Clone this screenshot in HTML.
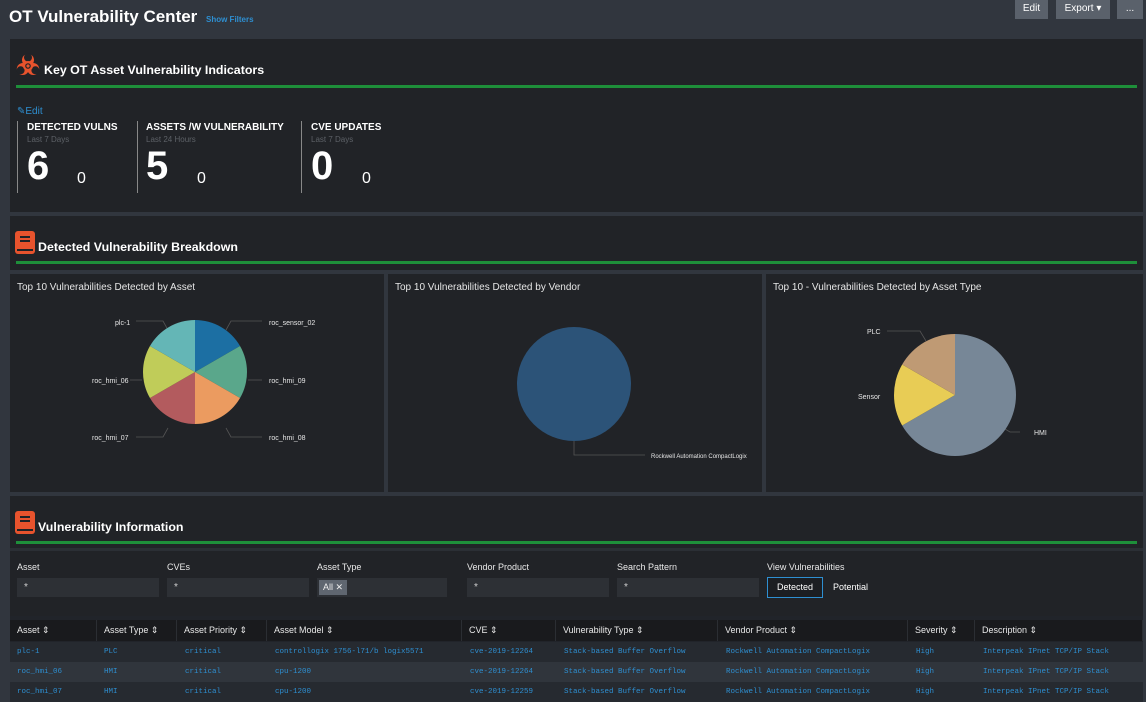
<!DOCTYPE html>
<html><head><meta charset="utf-8"><style>
*{margin:0;padding:0;box-sizing:border-box}
body{width:1146px;height:701px;overflow:hidden;background:#31363e;font-family:"Liberation Sans",sans-serif;color:#fff;position:relative}
.a{position:absolute}
.p{position:absolute;background:#212327}
.h{font-weight:bold;font-size:12.4px;color:#fff}
.g{position:absolute;height:3px;background:#1e8f3a}
.btn{position:absolute;top:0;height:19px;background:#5a616b;color:#fff;font-size:10px;text-align:center;line-height:18px}
.lbl{font-size:9px;color:#e8e8e8}
.in{position:absolute;height:19px;background:#2d3035;font-size:10px;color:#ccc;padding:4px 7px}
.th{position:absolute;top:620px;height:21px;background:#191a1d;font-size:9px;color:#e8e8e8;padding:5px 7px;border-right:1px solid #2b2e33}
.row{position:absolute;left:10px;width:1133px;height:20px;font-family:"Liberation Mono",monospace;font-size:7.5px;color:#2e8fd1}
.row span{position:absolute;top:6px}
.ct{font-size:10px;color:#e6e6e6;position:absolute;left:7px;top:8px}
.kt{font-size:10px;font-weight:bold;color:#fff}
.ks{font-size:8px;color:#5d6167;margin-top:2px}
.kn{font-size:40px;font-weight:bold;line-height:40px;margin-top:2px}
.kz{position:absolute;font-size:16px;color:#fff}
</style></head><body>
<div class="a" style="left:9px;top:7px;font-size:17px;font-weight:bold">OT Vulnerability Center</div>
<div class="a" style="left:206px;top:15px;font-size:8px;color:#2e8fd1;font-weight:bold">Show Filters</div>
<div class="btn" style="left:1015px;width:33px;top:0">Edit</div>
<div class="btn" style="left:1056px;width:54px">Export ▾</div>
<div class="btn" style="left:1117px;width:26px">...</div>

<div class="p" style="left:10px;top:39px;width:1133px;height:173px"></div>
<svg class="a" style="left:15px;top:53px" width="26" height="26" viewBox="-13 -13 26 26">
<g fill="#e8532d"><circle cx="0" cy="-6" r="6"/><circle cx="5.2" cy="3" r="6"/><circle cx="-5.2" cy="3" r="6"/></g>
<g fill="#212327"><circle cx="0" cy="-8.5" r="4"/><circle cx="7.4" cy="4.3" r="4"/><circle cx="-7.4" cy="4.3" r="4"/><circle r="2.8"/></g>
<circle r="4.2" fill="none" stroke="#e8532d" stroke-width="1.6"/><circle r="1.6" fill="#e8532d"/></svg>
<div class="a h" style="left:44px;top:63px">Key OT Asset Vulnerability Indicators</div>
<div class="g" style="left:16px;top:85px;width:1121px"></div>
<div class="a" style="left:17px;top:106px;font-size:10px;color:#2e8fd1">✎Edit</div>
<div class="a" style="left:17px;top:121px;width:1px;height:72px;background:#888"></div>
<div class="a" style="left:137px;top:121px;width:1px;height:72px;background:#888"></div>
<div class="a" style="left:301px;top:121px;width:1px;height:72px;background:#888"></div>
<div class="a" style="left:27px;top:122px"><div class="kt">DETECTED VULNS</div><div class="ks">Last 7 Days</div><div class="kn">6</div></div>
<div class="kz" style="left:77px;top:170px">0</div>
<div class="a" style="left:146px;top:122px"><div class="kt">ASSETS /W VULNERABILITY</div><div class="ks">Last 24 Hours</div><div class="kn">5</div></div>
<div class="kz" style="left:197px;top:170px">0</div>
<div class="a" style="left:311px;top:122px"><div class="kt">CVE UPDATES</div><div class="ks">Last 7 Days</div><div class="kn">0</div></div>
<div class="kz" style="left:362px;top:170px">0</div>

<div class="p" style="left:10px;top:216px;width:1133px;height:54px"></div>
<svg class="a" style="left:15px;top:231px" width="20" height="23"><rect width="20" height="23" rx="3" fill="#e8532d"/><rect x="5" y="5" width="10" height="2" fill="#212327"/><rect x="5" y="9" width="10" height="2" fill="#212327"/><rect x="2" y="18" width="16" height="2" fill="#212327"/></svg>
<div class="a h" style="left:38px;top:240px">Detected Vulnerability Breakdown</div>
<div class="g" style="left:16px;top:261px;width:1121px"></div>

<div class="p" style="left:10px;top:274px;width:374px;height:218px"><div class="ct">Top 10 Vulnerabilities Detected by Asset</div></div>
<div class="p" style="left:388px;top:274px;width:374px;height:218px"><div class="ct">Top 10 Vulnerabilities Detected by Vendor</div></div>
<div class="p" style="left:766px;top:274px;width:377px;height:218px"><div class="ct">Top 10 - Vulnerabilities Detected by Asset Type</div></div>

<svg class="a" style="left:0;top:0" width="1146" height="701">
<g stroke="#555" fill="none" stroke-width="0.8">
<polyline points="136,321 163,321 168,330"/><polyline points="262,321 231,321 226,330"/>
<polyline points="130,380 142,380"/><polyline points="262,380 248,380"/>
<polyline points="136,437 163,437 168,428"/><polyline points="262,437 231,437 226,428"/>
<polyline points="574,441 574,455 645,455"/>
<polyline points="887,331 920,331 926,341"/><polyline points="1020,432 1010,432 1000,426"/>
</g>
<path d="M195 372 L195 320 A52 52 0 0 1 240.03 346Z" fill="#1c6fa3"/>
<path d="M195 372 L240.03 346 A52 52 0 0 1 240.03 398Z" fill="#5aa78b"/>
<path d="M195 372 L240.03 398 A52 52 0 0 1 195 424Z" fill="#eb9b60"/>
<path d="M195 372 L195 424 A52 52 0 0 1 149.97 398Z" fill="#b35b5e"/>
<path d="M195 372 L149.97 398 A52 52 0 0 1 149.97 346Z" fill="#c0cc59"/>
<path d="M195 372 L149.97 346 A52 52 0 0 1 195 320Z" fill="#64b6b6"/>
<circle cx="574" cy="384" r="57" fill="#2c5378"/>
<path d="M955 395 L955 334 A61 61 0 1 1 902.17 425.5Z" fill="#778797"/>
<path d="M955 395 L902.17 425.5 A61 61 0 0 1 902.17 364.5Z" fill="#e8cc55"/>
<path d="M955 395 L902.17 364.5 A61 61 0 0 1 955 334Z" fill="#bf9a74"/>
<g font-family="Liberation Sans" font-size="7" fill="#e6e6e6">
<text x="115" y="325">plc-1</text><text x="269" y="325">roc_sensor_02</text>
<text x="92" y="383">roc_hmi_06</text><text x="269" y="383">roc_hmi_09</text>
<text x="92" y="440">roc_hmi_07</text><text x="269" y="440">roc_hmi_08</text>
<text x="651" y="458" font-size="6">Rockwell Automation CompactLogix</text>
<text x="867" y="334">PLC</text><text x="858" y="399">Sensor</text><text x="1034" y="435">HMI</text>
</g></svg>

<div class="p" style="left:10px;top:496px;width:1133px;height:120px"></div>
<svg class="a" style="left:15px;top:511px" width="20" height="23"><rect width="20" height="23" rx="3" fill="#e8532d"/><rect x="5" y="5" width="10" height="2" fill="#212327"/><rect x="5" y="9" width="10" height="2" fill="#212327"/><rect x="2" y="18" width="16" height="2" fill="#212327"/></svg>
<div class="a h" style="left:38px;top:520px">Vulnerability Information</div>
<div class="g" style="left:16px;top:541px;width:1121px"></div>
<div class="a" style="left:10px;top:548px;width:1133px;height:3px;background:#2b2f35"></div>
<div class="a lbl" style="left:17px;top:562px">Asset</div><div class="in" style="left:17px;top:578px;width:142px">*</div>
<div class="a lbl" style="left:167px;top:562px">CVEs</div><div class="in" style="left:167px;top:578px;width:142px">*</div>
<div class="a lbl" style="left:317px;top:562px">Asset Type</div><div class="in" style="left:317px;top:578px;width:130px;padding:2px"><span style="display:inline-block;background:#5f6670;color:#eee;font-size:9px;padding:2px 4px">All ✕</span></div>
<div class="a lbl" style="left:467px;top:562px">Vendor Product</div><div class="in" style="left:467px;top:578px;width:142px">*</div>
<div class="a lbl" style="left:617px;top:562px">Search Pattern</div><div class="in" style="left:617px;top:578px;width:142px">*</div>
<div class="a lbl" style="left:767px;top:562px">View Vulnerabilities</div>
<div class="a" style="left:767px;top:577px;width:56px;height:21px;border:1px solid #2e8fd1;background:#1c1e22;font-size:9px;text-align:center;line-height:19px">Detected</div>
<div class="a" style="left:833px;top:582px;font-size:9px">Potential</div>

<div class="a" style="left:10px;top:616px;width:1133px;height:85px;background:#21242a"></div>
<div class="th" style="left:10px;width:87px">Asset ⇕</div>
<div class="th" style="left:97px;width:80px">Asset Type ⇕</div>
<div class="th" style="left:177px;width:90px">Asset Priority ⇕</div>
<div class="th" style="left:267px;width:195px">Asset Model ⇕</div>
<div class="th" style="left:462px;width:94px">CVE ⇕</div>
<div class="th" style="left:556px;width:162px">Vulnerability Type ⇕</div>
<div class="th" style="left:718px;width:190px">Vendor Product ⇕</div>
<div class="th" style="left:908px;width:67px">Severity ⇕</div>
<div class="th" style="left:975px;width:168px">Description ⇕</div>
<div class="row" style="top:642px;background:#262a30"><span style="left:7px">plc-1</span><span style="left:94px">PLC</span><span style="left:175px">critical</span><span style="left:265px">controllogix 1756-l71/b logix5571</span><span style="left:460px">cve-2019-12264</span><span style="left:554px">Stack-based Buffer Overflow</span><span style="left:716px">Rockwell Automation CompactLogix</span><span style="left:906px">High</span><span style="left:973px">Interpeak IPnet TCP/IP Stack</span></div>
<div class="row" style="top:662px;background:#30353c"><span style="left:7px">roc_hmi_06</span><span style="left:94px">HMI</span><span style="left:175px">critical</span><span style="left:265px">cpu-1200</span><span style="left:460px">cve-2019-12264</span><span style="left:554px">Stack-based Buffer Overflow</span><span style="left:716px">Rockwell Automation CompactLogix</span><span style="left:906px">High</span><span style="left:973px">Interpeak IPnet TCP/IP Stack</span></div>
<div class="row" style="top:682px;background:#262a30"><span style="left:7px">roc_hmi_07</span><span style="left:94px">HMI</span><span style="left:175px">critical</span><span style="left:265px">cpu-1200</span><span style="left:460px">cve-2019-12259</span><span style="left:554px">Stack-based Buffer Overflow</span><span style="left:716px">Rockwell Automation CompactLogix</span><span style="left:906px">High</span><span style="left:973px">Interpeak IPnet TCP/IP Stack</span></div>
</body></html>
